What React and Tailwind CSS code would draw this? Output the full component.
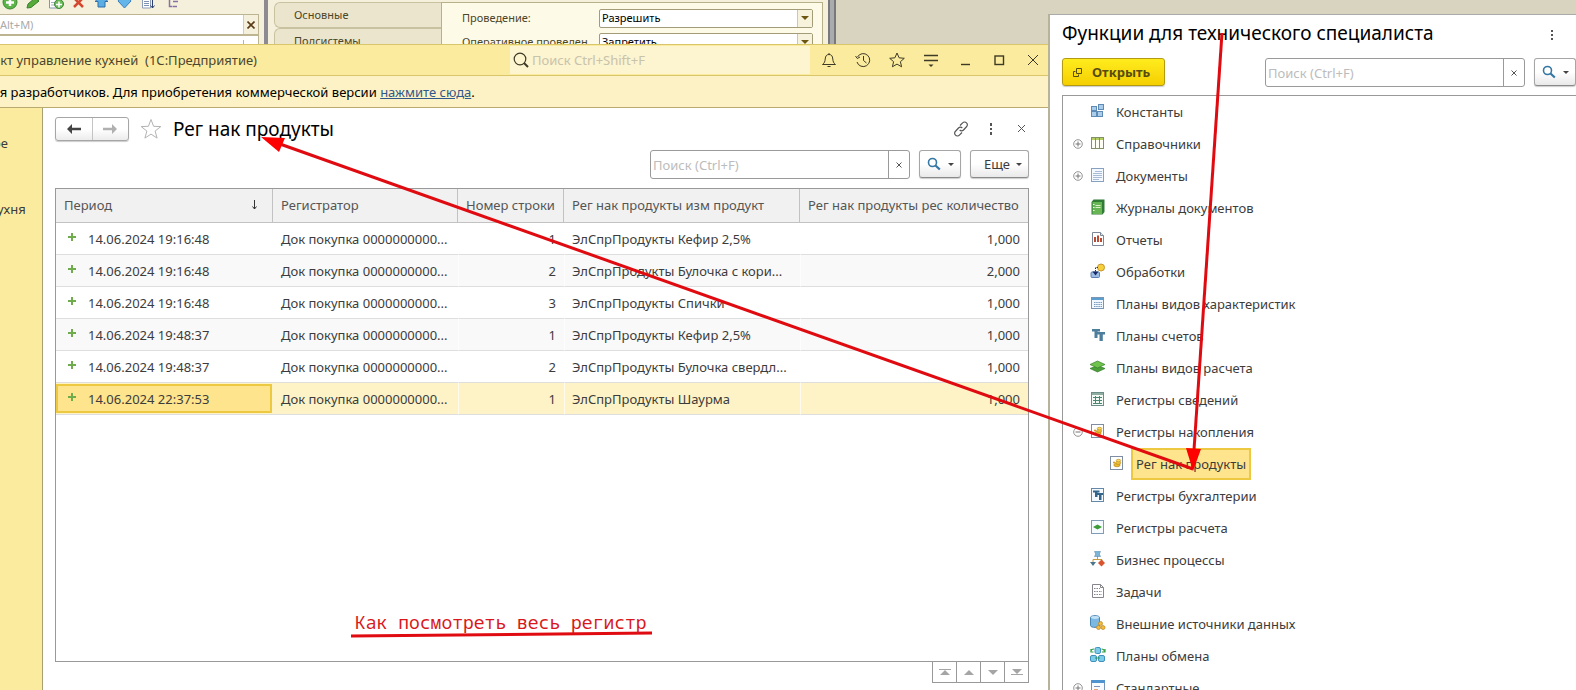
import React from "react";

const rows = [
  ["14.06.2024 19:16:48", 1, "ЭлСпрПродукты Кефир 2,5%", "1,000"],
  ["14.06.2024 19:16:48", 2, "ЭлСпрПродукты Булочка с кори...", "2,000"],
  ["14.06.2024 19:16:48", 3, "ЭлСпрПродукты Спички", "1,000"],
  ["14.06.2024 19:48:37", 1, "ЭлСпрПродукты Кефир 2,5%", "1,000"],
  ["14.06.2024 19:48:37", 2, "ЭлСпрПродукты Булочка свердл...", "1,000"],
  ["14.06.2024 22:37:53", 1, "ЭлСпрПродукты Шаурма", "1,000"],
];

const tree = [
  { label: "Константы", icon: "constants" },
  { label: "Справочники", icon: "catalog", toggle: "+" },
  { label: "Документы", icon: "document", toggle: "+" },
  { label: "Журналы документов", icon: "journal" },
  { label: "Отчеты", icon: "report" },
  { label: "Обработки", icon: "processing" },
  { label: "Планы видов характеристик", icon: "traits" },
  { label: "Планы счетов", icon: "accounts" },
  { label: "Планы видов расчета", icon: "layers" },
  { label: "Регистры сведений", icon: "info" },
  { label: "Регистры накопления", icon: "accum", toggle: "-" },
  { label: "Рег нак продукты", icon: "accum", child: true },
  { label: "Регистры бухгалтерии", icon: "booking" },
  { label: "Регистры расчета", icon: "calc" },
  { label: "Бизнес процессы", icon: "process" },
  { label: "Задачи", icon: "task" },
  { label: "Внешние источники данных", icon: "external" },
  { label: "Планы обмена", icon: "exchange" },
  { label: "Стандартные", icon: "standard", toggle: "+" },
];

const glyphs = {
  constants: (
    <g fill="#a9cdea" stroke="#5d8bb5">
      <rect x="1.5" y="3.5" width="5" height="4" />
      <rect x="8.5" y="1.5" width="5" height="5" />
      <rect x="1.5" y="8.5" width="5" height="5" />
      <rect x="7.5" y="8.5" width="5" height="5" />
    </g>
  ),
  catalog: (
    <g>
      <rect x="1.5" y="2.5" width="12" height="11" fill="#fffef4" stroke="#84906a" />
      <rect x="2" y="3" width="11" height="2" fill="#b6cf62" />
      <path d="M5.5 3v10M9.5 3v10" stroke="#84906a" />
    </g>
  ),
  document: (
    <g>
      <rect x="1.5" y="1.5" width="12" height="13" fill="#f4f9ff" stroke="#87a1be" />
      <path d="M5 4.500h7M3 6.500h9M3 8.500h9M3 10.500h9M3 12.500h6" stroke="#a8bdd5" />
    </g>
  ),
  journal: (
    <g>
      <path d="M1.500 3l2-2.500h11v12.500l-2 2.500h-11z" fill="#2f7a35" />
      <rect x="2.500" y="3" width="9.500" height="12" fill="#67b653" />
      <path d="M5.500 6.500h5M5.500 8.500h5" stroke="#d9f1c8" />
      <path d="M3 5.500h1.500M3 8.500h1.500M3 11.500h1.500" stroke="#fff" />
    </g>
  ),
  report: (
    <g>
      <path d="M2.500 1.500h8l3 3v10h-11z" fill="#fff" stroke="#7b8796" />
      <path d="M10.500 1.500v3h3" fill="#dfe8ee" stroke="#7b8796" />
      <path d="M4 6h2v5H4zM7 4.500h2V11H7zM10 7h2v4h-2z" fill="#bd4a33" />
    </g>
  ),
  processing: (
    <g>
      <rect x="1" y="9" width="8.500" height="5.500" rx="1" fill="#9cbbe4" stroke="#5f7eae" />
      <circle cx="11" cy="4.500" r="3.500" fill="#f6cf3c" stroke="#c7952b" />
      <path d="M8 4.500H5.500V9" fill="none" stroke="#333" strokeDasharray="1.500 1" />
      <path d="M2.500 8.500h6l-3 4z" fill="#152a66" />
    </g>
  ),
  traits: (
    <g>
      <rect x="1.500" y="2.500" width="12" height="11" fill="#f2f8ff" stroke="#7895b4" />
      <rect x="2" y="3" width="11" height="2" fill="#5d9ed0" />
      <path d="M4 7.500h8M4 9.500h8M4 11.500h8" stroke="#7799bd" strokeDasharray="1.500 .7" />
    </g>
  ),
  accounts: (
    <path d="M2 2h8v2.500H7.500V11h-3V4.500H2zM7 5h8v2.500h-2.200V14H9.500V7.500H7z" fill="#4d7f9d" />
  ),
  layers: (
    <g stroke="#35802a" strokeWidth=".7">
      <path d="M0 9.500l7.500-3 7.500 3-7.500 3.500z" fill="#4c9e38" />
      <path d="M0 5.500L7.500 2 15 5.500 7.500 9z" fill="#70c34a" />
    </g>
  ),
  info: (
    <g>
      <rect x="1.500" y="1.500" width="12" height="13" fill="#f4fbf6" stroke="#6d8c8a" />
      <rect x="2" y="2" width="11" height="2" fill="#8fae9f" />
      <path d="M3 6.500h9M3 9.500h9M5.500 5v8M9.500 5v8M3 12.500h9" stroke="#4b8672" />
    </g>
  ),
  accum: (
    <g>
      <rect x="1.500" y="1.500" width="12" height="13" fill="#fff" stroke="#7f8da3" />
      <ellipse cx="8" cy="10" rx="3.200" ry="1.800" fill="#e9b72a" stroke="#b0811b" strokeWidth=".6" />
      <ellipse cx="9.200" cy="7.800" rx="2.600" ry="1.500" fill="#f3c63a" stroke="#b0811b" strokeWidth=".6" />
      <ellipse cx="9.500" cy="5.600" rx="2.300" ry="1.300" fill="#ffdc58" stroke="#b0811b" strokeWidth=".6" />
      <circle cx="5" cy="7.500" r="1.100" fill="#d99d20" />
    </g>
  ),
  booking: (
    <g>
      <rect x="1.500" y="1.500" width="12" height="13" fill="#f5faff" stroke="#6688a8" />
      <path d="M3 3.500h6.500V5.500H7.500V10H5V5.500H3zM7 6h6v2h-1.500v5H9V8H7z" fill="#33658a" />
    </g>
  ),
  calc: (
    <g>
      <rect x="1.500" y="1.500" width="12" height="13" fill="#f5fbff" stroke="#7e9db4" />
      <path d="M3 8l4.500-2.500L12 8l-4.500 2.500z" fill="#3e9b38" />
    </g>
  ),
  process: (
    <g>
      <path d="M7.500 5v3M3 11V8.500h9V11" stroke="#c59b43" fill="none" />
      <path d="M4.500 .5h6l-1.200 2.500 1.200 2.500h-6L5.700 3z" fill="#7cb5d8" stroke="#5d8fb1" strokeWidth=".6" />
      <path d="M0 11h6l-3 4z" fill="#4a7790" />
      <path d="M11.500 8.500l3.500 3.500-3.500 3.500L8 12z" fill="#d8532e" />
    </g>
  ),
  task: (
    <g>
      <path d="M2.500 1.500h8l3 3v10h-11z" fill="#fff" stroke="#84868c" />
      <path d="M10.500 1.500v3h3" fill="none" stroke="#84868c" />
      <path d="M4 5.500h6M4 8.500h8M4 11.500h8" stroke="#85858f" strokeDasharray="1.500 1" />
    </g>
  ),
  external: (
    <g>
      <path d="M.5 2.500C.5 0 9.500 0 9.500 2.500v8c0 2.500-9 2.500-9 0z" fill="#7bb9e2" stroke="#4a86b5" />
      <ellipse cx="5" cy="2.500" rx="4" ry="1.400" fill="#c2e2f5" />
      <g fill="#f2bd3d" stroke="#b9811e" strokeWidth=".7">
        <circle cx="10.500" cy="8.500" r="2" />
        <circle cx="8.500" cy="12.500" r="2" />
        <circle cx="13" cy="12.500" r="2" />
      </g>
    </g>
  ),
  exchange: (
    <g>
      <g fill="#7ccbe9" stroke="#3f92bb">
        <rect x="5" y=".5" width="5.500" height="6" rx="1.500" />
        <rect x=".5" y="8.500" width="6" height="6" rx="1.500" />
        <rect x="8.500" y="8.500" width="6" height="6" rx="1.500" />
      </g>
      <path d="M.8 4.500C1 3 2 2 4 2M1 2v3h2.500M11.500 2c2 0 2.800 1 3 2.500M12 5h3V2M5 11h5" fill="none" stroke="#31a046" strokeWidth="1.200" />
    </g>
  ),
  standard: (
    <g>
      <rect x="1.500" y="1.500" width="13" height="13" fill="#f7fbff" stroke="#7a94b4" />
      <rect x="1" y="1" width="14" height="3" fill="#4f94cf" />
      <path d="M4 7.500h6" stroke="#7e93b5" />
      <path d="M4 10h4v2H4z" fill="#e7a778" />
    </g>
  ),
};

function Glyph({ name }) {
  return (
    <svg className="size-4 shrink-0" viewBox="0 0 16 16" aria-hidden="true">
      {glyphs[name]}
    </svg>
  );
}

function Toggle({ kind }) {
  return (
    <button type="button" aria-label={kind === "+" ? "Развернуть" : "Свернуть"} className="block">
      <svg className="size-[10px]" viewBox="0 0 10 10" fill="none" stroke="#777">
        <circle cx="5" cy="5" r="4.300" strokeWidth=".8" />
        <path d={kind === "+" ? "M2.500 5h5M5 2.500v5" : "M2.500 5h5"} />
      </svg>
    </button>
  );
}

function Caret() {
  return <span className="border-x-[3px] border-t-[3px] border-x-transparent border-t-[#444]" />;
}

function Lens() {
  return (
    <svg className="size-[14px]" viewBox="0 0 14 14" fill="none" stroke="#3477a4">
      <circle cx="5.500" cy="5.500" r="4" strokeWidth="1.600" />
      <path d="M8.500 8.500l4.300 4" strokeWidth="2.200" />
    </svg>
  );
}

const softButton =
  "flex items-center rounded-[3px] border border-[#a6a6a6] border-b-[#8a8a8a] bg-linear-to-b from-white from-50% to-[#e9e9e9] shadow-[0_1px_1px_#ccc]";

function SearchBox({ label, className }) {
  return (
    <div className={"flex h-[29px] rounded-[3px] border border-[#9a9a9a] bg-white " + className}>
      <input
        aria-label={label}
        placeholder="Поиск (Ctrl+F)"
        className="min-w-0 flex-1 px-[2px] outline-none placeholder:text-[#bcbcbc]"
      />
      <button type="button" aria-label="Очистить" className="flex w-[21px] items-center justify-center border-l border-[#9a9a9a]">
        <svg className="size-[6px]" viewBox="0 0 6 6" stroke="#555">
          <path d="M.5 .5l5 5M5.500 .5l-5 5" />
        </svg>
      </button>
    </div>
  );
}

function LensButton() {
  return (
    <button type="button" aria-label="Найти" className={softButton + " h-[28px] w-[42px] shrink-0 justify-between pr-[6px] pl-[7px]"}>
      <Lens />
      <Caret />
    </button>
  );
}

function Field({ label, value, id }) {
  return (
    <div className="flex h-[24px] items-center text-[11px] leading-[16px] text-[#4c4526]">
      <label htmlFor={id} className="w-[137px] whitespace-nowrap">
        {label}
      </label>
      <div className="flex h-[19px] w-[214px] rounded-[2px] border border-[#a39c79] bg-white">
        <select id={id} className="min-w-0 flex-1 appearance-none px-[2px] text-black">
          <option>{value}</option>
        </select>
        <span className="pointer-events-none flex w-[15px] items-center justify-center border-l border-[#cfc8a4] bg-[#f6f2dc]">
          <span className="border-x-4 border-t-4 border-x-transparent border-t-[#6b5510]" />
        </span>
      </div>
    </div>
  );
}

function Configurator() {
  return (
    <div className="flex h-[44px] overflow-hidden bg-[#d8d4bf]">
      <div className="h-[80px] w-[264px] shrink-0 bg-[#f4f0dc]">
        <div className="flex h-[14px] items-start overflow-hidden">
          <svg className="h-[10px] w-[190px]" viewBox="0 0 190 10" fill="none">
            <circle cx="10" cy="2" r="7" fill="#5cb548" stroke="#3d8a35" />
            <path d="M6 2.500h8M10 0v6" stroke="#fff" strokeWidth="2.500" />
            <path d="M27 8l1-4 7-6 4 3-8 6.500z" fill="#57ab3a" stroke="#37812c" />
            <path d="M49.500-3h10V8h-10z" fill="#fff" stroke="#7f96ad" />
            <path d="M51 2.500h6M51 5h4" stroke="#9fb1c3" />
            <circle cx="59" cy="4" r="4.500" fill="#6dbb5b" stroke="#3d8a35" />
            <path d="M56 4.500h6M59 1.500v6" stroke="#fff" strokeWidth="1.500" />
            <path d="M74 7l9-9M83 7l-9-9" stroke="#d4472e" strokeWidth="2.500" />
            <path d="M95 1.500l6.500-6 6.500 6h-3V7h-7V1.500z" fill="#5aaee4" stroke="#2f6ea8" />
            <path d="M118 1l6.500 7L131 1l-3-4h-7z" fill="#64b6ea" stroke="#3b7fba" />
            <path d="M142.500-3h8V8h-8z" fill="#fff" stroke="#8b9bb8" />
            <path d="M144 1.500h5M144 3.500h5M144 5.500h5" stroke="#7f91b3" />
            <path d="M152.500-2V8M150.500 5.500l2 2.500 2-2.500" stroke="#2e3f70" />
            <path d="M169.500-2V6.500h3M173 1.500h5M173 6.500h4" stroke="#8a6fa5" strokeWidth="1.500" />
          </svg>
        </div>
        <div className="flex h-[21px] w-[259px] border border-l-0 border-[#bdb591] bg-white">
          <input aria-label="Поиск" placeholder="Alt+M)" className="min-w-0 flex-1 text-[11px] outline-none placeholder:text-[#aaa]" />
          <button type="button" aria-label="Очистить" className="flex w-[15px] items-center justify-center border-l border-[#d5ceae] bg-[#f4f0dc]">
            <svg className="size-[8px]" viewBox="0 0 8 8" stroke="#5b3a17" strokeWidth="1.600">
              <path d="M.5 .5l7 7M7.500 .5l-7 7" />
            </svg>
          </button>
        </div>
        <div className="flex h-[30px] w-[259px] border border-l-0 border-[#bdb591] bg-white pt-[4px]">
          <span className="flex-1 text-[11px] leading-[16px]">Управление кухней</span>
          <span className="w-[15px] border-l border-[#bdb591]" />
        </div>
      </div>
      <div className="w-[4px] shrink-0 bg-[#8d8a92]" />
      <div className="flex h-[80px] w-[560px] shrink-0 bg-[#f4f0dc] pt-[2px] pl-[6px]">
        <div className="w-[167px] text-[11px] text-[#4c4526]">
          <div className="flex h-[26px] items-center rounded-l-[6px] border border-r-0 border-[#c9c2a0] bg-[#ebe5cd] pl-[19px]">Основные</div>
          <div className="flex h-[26px] items-center rounded-l-[6px] border border-r-0 border-[#c9c2a0] bg-[#ebe5cd] pl-[19px]">Подсистемы</div>
        </div>
        <div className="w-[382px] border border-[#b8b089] bg-[#fdfae8] pt-[3px] pl-[20px]">
          <Field id="posting" label="Проведение:" value="Разрешить" />
          <Field id="realtime" label="Оперативное проведен" value="Запретить" />
        </div>
      </div>
      <div className="w-[8px] shrink-0 border-x-2 border-[#77797c] bg-[#a9abad]" />
    </div>
  );
}

const titleIcons = [
  ["Уведомления", <path d="M1.500 12.500h13c-2-1.500-2.500-3-2.700-5.500C11.500 4 10.500 2.500 8 2.500S4.500 4 4.200 7c-.2 2.500-.7 4-2.700 5.500zM8 2.500V1M6.500 14.500h3" />],
  ["История", <path d="M2.500 5A6.500 6.500 0 1 1 2 10M.5 4l1.800 2.500L5 5M8.500 4v4.500l3 2.500" />],
  ["Избранное", <path d="M8 1l2.100 4.800 5.200.5-3.900 3.400 1.200 5.100L8 12.100l-4.600 2.700 1.200-5.100L.7 6.300l5.200-.5z" />],
  ["Настройки", <g><path d="M1 3.500h14M1 8.500h14" strokeWidth="1.400" /><path d="M5.500 12.500h5L8 15z" fill="#3d3a25" stroke="none" /></g>],
  ["Свернуть", <path d="M4 12.500h9" strokeWidth="1.400" />],
  ["Развернуть окно", <rect x="4" y="4" width="8.500" height="8.500" strokeWidth="1.400" />],
  ["Закрыть", <path d="M3 3l10 10M13 3L3 13" />],
];

function TitleBar() {
  return (
    <header className="flex h-[32px] items-center border-y border-[#d9c56a] bg-[#fbeb9e]">
      <h1 className="-ml-[7px] flex-1 whitespace-pre text-[13px] text-[#4c4630]">ект управление кухней  (1С:Предприятие)</h1>
      <div className="flex h-[28px] w-[300px] items-center bg-[#fdf4d0] pl-[3px]">
        <svg className="size-4 shrink-0" viewBox="0 0 16 16" fill="none" stroke="#3d3a25">
          <circle cx="7" cy="7" r="5.800" strokeWidth="1.200" />
          <path d="M11 11l4 4" strokeWidth="2" />
        </svg>
        <input aria-label="Глобальный поиск" placeholder="Поиск Ctrl+Shift+F" className="min-w-0 flex-1 px-[3px] outline-none placeholder:text-[#c8c3ab]" />
      </div>
      <div className="-mr-[2px] ml-[2px] flex">
        {titleIcons.map(([label, art]) => (
          <button key={label} type="button" aria-label={label} className="flex w-[34px] justify-center">
            <svg className="size-4" viewBox="0 0 16 16" fill="none" stroke="#3d3a25">
              {art}
            </svg>
          </button>
        ))}
      </div>
    </header>
  );
}

const scrollIcons = [
  ["В начало", "M1 1h12v1H1zM7 2l5 5H2z"],
  ["Вверх", "M7 2l5 5H2z"],
  ["Вниз", "M2 2h10L7 7z"],
  ["В конец", "M2 1h10L7 6zM1 6h12v1H1z"],
];

function Register() {
  return (
    <main className="flex min-w-0 flex-1 flex-col bg-white pt-[8px] pr-[19px] pb-[7px] pl-[12px]">
      <div className="flex h-[26px] items-center">
        <div className="flex h-[24px] w-[74px] rounded-[3px] border border-[#a6a6a6] bg-linear-to-b from-white from-50% to-[#ececec] shadow-[0_1px_1px_#ccc]">
          <button type="button" aria-label="Назад" className="flex flex-1 items-center justify-center border-r border-[#c4c4c4]">
            <svg className="h-[10px] w-[14px]" viewBox="0 0 14 10">
              <path d="M0 5l5-5v3.800h9v2.400H5V10z" fill="#444" />
            </svg>
          </button>
          <button type="button" aria-label="Вперед" className="flex flex-1 items-center justify-center">
            <svg className="h-[10px] w-[14px]" viewBox="0 0 14 10">
              <path d="M14 5L9 0v3.800H0v2.400h9V10z" fill="#b0b0b0" />
            </svg>
          </button>
        </div>
        <button type="button" aria-label="В избранное" className="ml-[11px]">
          <svg className="size-[22px]" viewBox="0 0 22 22" fill="none" stroke="#b3b3b3">
            <path d="M11 1.500l2.600 6.800 7.200.3-5.700 4.500 2 7-6.100-4-6.100 4 2-7L1.200 8.600l7.200-.3z" />
          </svg>
        </button>
        <h2 className="ml-[11px] flex-1 text-[19px] leading-[26px] text-black">Рег нак продукты</h2>
        <div className="flex items-center gap-[14px]">
          <button type="button" aria-label="Получить ссылку">
            <svg className="size-4" viewBox="0 0 16 16" fill="none" stroke="#555" strokeWidth="1.200">
              <path d="M7 4.500l2.600-2.600a2.600 2.600 0 0 1 3.900 0 2.600 2.600 0 0 1 0 3.900L10.500 9a2.600 2.600 0 0 1-3.800 0M9 11.500l-2.600 2.600a2.600 2.600 0 0 1-3.900 0 2.600 2.600 0 0 1 0-3.900L5.500 7a2.600 2.600 0 0 1 3.800 0" />
            </svg>
          </button>
          <button type="button" aria-label="Дополнительно">
            <svg className="size-4" viewBox="0 0 16 16" fill="#555">
              <path d="M7 2h2v3H7zM7 7h2v2H7zM7 11h2v3H7z" />
            </svg>
          </button>
          <button type="button" aria-label="Закрыть форму">
            <svg className="size-4" viewBox="0 0 16 16" stroke="#555">
              <path d="M5 4l7 7M12 4l-7 7" />
            </svg>
          </button>
        </div>
      </div>
      <div className="mt-[8px] flex h-[30px] justify-end">
        <SearchBox label="Поиск в списке" className="w-[260px]" />
        <div className="ml-[9px] flex gap-[9px]">
          <LensButton />
          <button type="button" className={softButton + " h-[28px] w-[59px] justify-end gap-[6px] pr-[6px]"}>
            Еще
            <Caret />
          </button>
        </div>
      </div>
      <div className="mt-[8px] min-h-0 flex-1 overflow-hidden border border-[#999]">
        <table className="w-full table-fixed border-separate border-spacing-0 whitespace-nowrap">
          <colgroup>
            <col className="w-[217px]" />
            <col className="w-[185px]" />
            <col className="w-[106px]" />
            <col className="w-[236px]" />
            <col />
          </colgroup>
          <thead className="bg-[#f1f1f1] text-[#555] [&_th]:border-b [&_th]:border-[#c2c2c2] [&_th]:px-[8px] [&_th]:pb-[2px] [&_th]:font-normal">
            <tr className="h-[34px] text-left">
              <th className="border-r">
                <div className="flex items-center justify-between">
                  Период
                  <svg className="mr-[6px] h-[10px] w-[7px]" viewBox="0 0 7 10" fill="none" stroke="#333">
                    <path d="M3.500 0v9M1.500 6.500l2 2.500 2-2.500" />
                  </svg>
                </div>
              </th>
              <th className="border-r">Регистратор</th>
              <th className="border-r">Номер строки</th>
              <th className="border-r">Рег нак продукты изм продукт</th>
              <th>Рег нак продукты рес количество</th>
            </tr>
          </thead>
          <tbody className="text-[#3c3c3c] [&_td]:border-b [&_td]:border-b-[#dedede]">
            {rows.map(([period, line, product, qty], i) => {
              const last = i === rows.length - 1;
              return (
                <tr key={i} className={"h-[32px] " + (last ? "bg-[#fdf3c6]" : i % 2 ? "bg-[#f9f9f9]" : "bg-white")}>
                  <td className="p-0">
                    <div className={"flex h-[29px] items-center pl-[12px] " + (last ? "mr-px bg-[#fee48c] ring-2 ring-[#ecc940] ring-inset" : "")}>
                      <svg className="mb-[4px] size-[8px]" viewBox="0 0 8 8" stroke="#6fad4c" strokeWidth="2">
                        <path d="M0 4h8M4 0v8" />
                      </svg>
                      <span className="ml-[12px]">{period}</span>
                    </div>
                  </td>
                  <td className="overflow-hidden px-[8px]">Док покупка 0000000000...</td>
                  <td className="border-l border-white/70 px-[8px] text-right">{line}</td>
                  <td className="border-l border-white/70 px-[7px]">{product}</td>
                  <td className="border-l border-white/70 px-[8px] text-right">{qty}</td>
                </tr>
              );
            })}
          </tbody>
        </table>
      </div>
      <div className="flex justify-end">
        {scrollIcons.map(([label, d]) => (
          <button key={label} type="button" aria-label={label} className="-ml-px flex h-[21px] w-[25px] items-center justify-center border border-t-0 border-[#999]">
            <svg className="h-[8px] w-[14px]" viewBox="0 0 14 8" fill="#a5a5a5">
              <path d={d} />
            </svg>
          </button>
        ))}
      </div>
    </main>
  );
}

function Functions() {
  return (
    <aside className="mt-[14px] flex w-[528px] shrink-0 flex-col overflow-hidden border-t border-l-2 border-t-[#aaa] border-l-[#b7b49a] bg-white pl-[12px]">
      <div className="flex h-[36px] items-center justify-between pr-[17px]">
        <h2 className="text-[19px] leading-[26px] text-black">Функции для технического специалиста</h2>
        <button type="button" aria-label="Дополнительно" className="mt-[4px]">
          <svg className="size-[14px]" viewBox="0 0 14 14" fill="#555">
            <path d="M6 2h2v2H6zM6 6h2v2H6zM6 10h2v2H6z" />
          </svg>
        </button>
      </div>
      <div className="mt-[7px] flex justify-between">
        <button
          type="button"
          className="flex h-[28px] w-[103px] items-center rounded-[3px] border border-[#b39a10] bg-linear-to-b from-[#ffec1c] to-[#f5cf00] pl-[10px] font-bold text-[#564c10] shadow-[0_1px_1px_#ccc]"
        >
          <svg className="mr-[10px] size-[9px]" viewBox="0 0 9 9" fill="none" stroke="#564c10">
            <path d="M3.500 .5h5v5h-5zM2.500 3.500h-2v5h5v-2" />
          </svg>
          Открыть
        </button>
        <div className="flex">
          <SearchBox label="Поиск функций" className="w-[260px]" />
          <div className="ml-[9px]">
            <LensButton />
          </div>
        </div>
      </div>
      <ul className="mt-[8px] min-h-0 flex-1 overflow-hidden border-t border-l border-[#999] text-[#3c3c3c]">
        {tree.map(({ label, icon, toggle, child }) => (
          <li key={label} className={"flex h-[32px] items-center " + (child ? "pl-[46px]" : "pl-[10px]")}>
            {!child && <span className="mr-[7px] w-[10px]">{toggle && <Toggle kind={toggle} />}</span>}
            <span className="mb-[3px]">
              <Glyph name={icon} />
            </span>
            {child ? (
              <button type="button" className="ml-[6px] h-full border-2 border-[#ecc940] bg-[#fee48c] px-[3px]">
                {label}
              </button>
            ) : (
              <span className="ml-[10px]">{label}</span>
            )}
          </li>
        ))}
      </ul>
    </aside>
  );
}

function Annotations() {
  return (
    <svg className="pointer-events-none absolute top-0 left-0 h-[690px] w-[1576px]" viewBox="0 0 1576 690" aria-hidden="true">
      <g stroke="#e00b10" strokeWidth="3" fill="none">
        <path d="M1222 33L1194 450" />
        <path d="M1193 469L280 144" />
        <path d="M351 636L652 633" />
      </g>
      <path d="M1193 471l-7-23 15 1z" fill="#f00" />
      <path d="M261 137l24 1-6 14z" fill="#f00" />
    </svg>
  );
}

export default function App() {
  return (
    <div className="relative flex h-screen overflow-hidden bg-[#d8d4bf] font-['Noto_Sans','Open_Sans',sans-serif] text-[13px] leading-[18px] text-[#3c3c3c]">
      <div className="flex min-w-0 flex-1 flex-col">
        <Configurator />
        <TitleBar />
        <div className="h-[32px] overflow-hidden border-b border-[#b9ab70] bg-[#fdf2c5]">
          <p className="-ml-[8px] whitespace-pre pt-[7px] text-black">
            ля разработчиков. Для приобретения коммерческой версии{" "}
            <a href="#buy" className="text-[#31588c] underline">
              нажмите сюда
            </a>
            .
          </p>
        </div>
        <div className="flex min-h-0 flex-1">
          <nav className="flex w-[43px] shrink-0 flex-col items-start gap-[48px] overflow-hidden border-r border-[#a89f72] bg-[#fbeb9e] pt-[26px]">
            <a href="#main" className="-ml-[7px]">ое</a>
            <a href="#kitchen" className="-ml-[3px]">ухня</a>
          </nav>
          <Register />
        </div>
      </div>
      <Functions />
      <Annotations />
      <p className="absolute top-[611px] left-[355px] font-['Noto_Sans_Mono','DejaVu_Sans_Mono',monospace] text-[18px] leading-[22px] text-[#d8181c]">
        Как посмотреть весь регистр
      </p>
    </div>
  );
}
